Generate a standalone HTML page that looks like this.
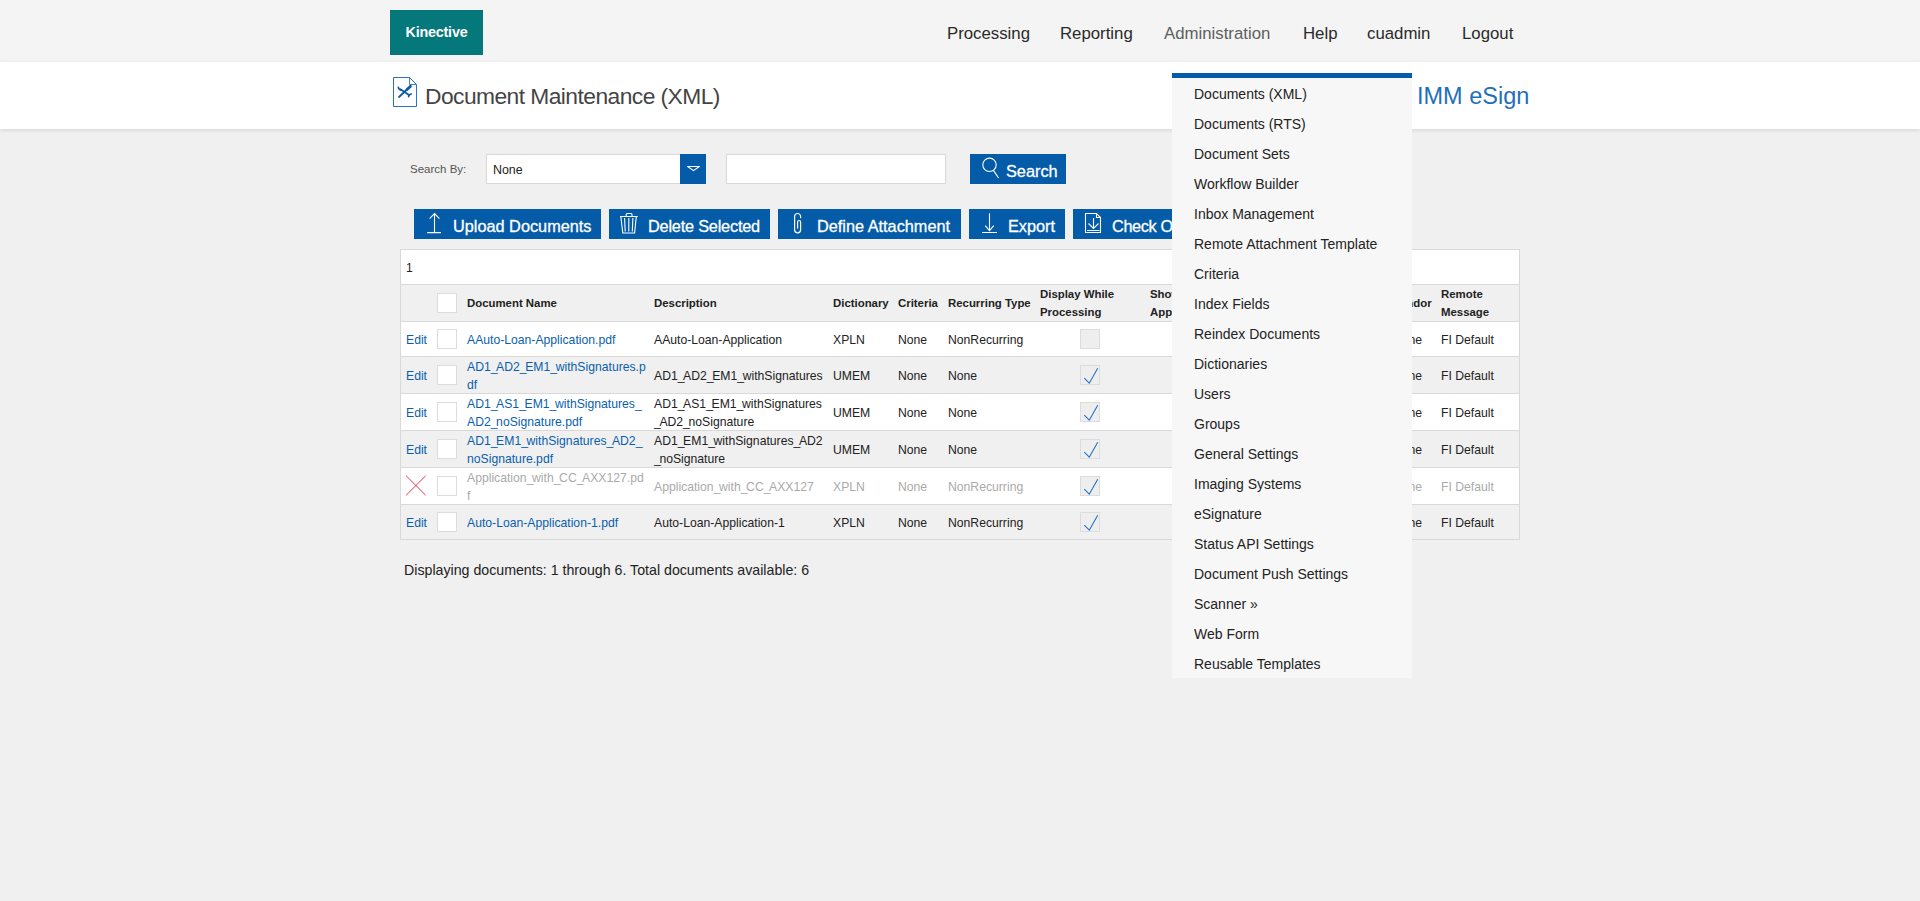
<!DOCTYPE html>
<html><head><meta charset="utf-8">
<style>
*{box-sizing:border-box;margin:0;padding:0}
html,body{width:1920px;height:901px;overflow:hidden}
body{background:#f0f0f0;font-family:"Liberation Sans",sans-serif;color:#222;position:relative}
.abs{position:absolute}
#hdr{left:0;top:0;width:1920px;height:62px;background:#f4f4f4}
#logo{left:390px;top:10px;width:93px;height:45px;background:#04787a;color:#fff;font-weight:bold;font-size:14.3px;letter-spacing:-0.2px;line-height:45px;text-align:center}
.nav{top:23px;font-size:16.8px;color:#2a2a2a;line-height:22px;white-space:nowrap}
#tbar{left:0;top:62px;width:1920px;height:67px;background:#fff;box-shadow:0 1px 4px rgba(0,0,0,0.12)}
#ttl{left:425px;top:82px;font-size:22.8px;letter-spacing:-0.55px;color:#444;line-height:28px;white-space:nowrap}
#imm{left:1417px;top:81px;font-size:23.5px;color:#1f6fba;line-height:30px;white-space:nowrap}
#dd{left:1172px;top:73px;width:240px;height:605px;background:#f7f7f7;border-top:5px solid #045ba8}
.mi{left:22px;font-size:14px;color:#222;line-height:18px;white-space:nowrap}

#sby{left:410px;top:161px;font-size:11.5px;color:#555;line-height:16px}
#sel{left:486px;top:154px;width:220px;height:30px;background:#fff;border:1px solid #d8d8d8}
#sel .t{position:absolute;left:6px;top:7px;font-size:12.4px;color:#222;line-height:16px}
#sel .ar{position:absolute;right:-1px;top:-1px;width:26px;height:30px;background:#045ba8}
#txt{left:726px;top:154px;width:220px;height:30px;background:#fff;border:1px solid #d8d8d8}
.btn{height:30px;background:#045ba8;color:#fff;font-size:16.3px;line-height:30px;white-space:nowrap}
.btn svg{position:absolute}
.btn span{position:absolute;top:2px;-webkit-text-stroke:0.3px #fff}
#tbl{left:400px;top:249px;width:1120px;height:291px;background:#fff;border:1px solid #d9d9d9}
#pg{left:406px;top:260px;font-size:12px;color:#222;line-height:16px}
#thd{left:400px;top:284px;width:1120px;height:38px;background:#f0f0f0;box-shadow:inset 1px 0 #d9d9d9,inset -1px 0 #d9d9d9;border-top:1px solid #d9d9d9;border-bottom:1px solid #d9d9d9}
.th{position:absolute;top:50%;transform:translateY(-50%);font-size:11.4px;font-weight:bold;color:#222;line-height:18px;white-space:nowrap}
.row{position:absolute;left:400px;width:1120px;border-bottom:1px solid #d9d9d9;box-shadow:inset 1px 0 #d9d9d9,inset -1px 0 #d9d9d9}
.row .c{position:absolute;top:calc(50% + 1px);transform:translateY(-50%);font-size:12.2px;color:#222;line-height:18px;white-space:nowrap}
.row .lnk{color:#0a5fad}
.row.dis .c{color:#aaa}
.cb{position:absolute;left:37px;top:50%;margin-top:-10px;width:20px;height:20px;background:#fff;border:1px solid #dcdcdc}
.cb2{position:absolute;left:680px;top:50%;margin-top:-10px;width:20px;height:20px;background:#eee;border:1px solid #dcdcdc}
.cb2 svg{position:absolute;left:0;top:0}
.xic{position:absolute;left:5px;top:50%;margin-top:-11px}
#foot{left:404px;top:561px;font-size:14.2px;color:#222;line-height:18px;white-space:nowrap}
.row u{text-decoration:none;letter-spacing:-1.4px}
</style></head><body>
<div id="hdr" class="abs"></div>
<div id="logo" class="abs">Kinective</div>
<div class="abs nav" style="left:947px">Processing</div>
<div class="abs nav" style="left:1060px">Reporting</div>
<div class="abs nav" style="left:1164px;color:#5e5e5e">Administration</div>
<div class="abs nav" style="left:1303px">Help</div>
<div class="abs nav" style="left:1367px">cuadmin</div>
<div class="abs nav" style="left:1462px">Logout</div>
<div id="tbar" class="abs"></div>
<svg class="abs" style="left:392px;top:76px" width="26" height="32" viewBox="0 0 26 32"><path d="M1.5 1.5H17.5L24.5 8.5V30.5H1.5Z" stroke="#2a72c4" stroke-width="1" fill="#fff"/><path d="M17.5 1.5V8.5H24.5" stroke="#2a72c4" stroke-width="0.9" fill="none"/><path d="M7 21L15.5 13" stroke="#0c5aa6" stroke-width="1.8" stroke-linecap="round"/><path d="M15 13.5L18.5 10.2" stroke="#0c5aa6" stroke-width="2.8" stroke-linecap="round"/><path d="M8.5 13.2L17 19" stroke="#0c5aa6" stroke-width="1.8" stroke-linecap="round"/><path d="M6.3 11.2Q6.6 13.9 9 14.2M19.3 18Q16.5 18.4 16.6 20.8" stroke="#0c5aa6" stroke-width="1.6" fill="none" stroke-linecap="round"/></svg>
<div id="ttl" class="abs">Document Maintenance (XML)</div>
<div id="imm" class="abs">IMM eSign</div>


<div id="sby" class="abs">Search By:</div>
<div id="sel" class="abs"><div class="t">None</div><div class="ar"><svg width="26" height="30" viewBox="0 0 26 30"><path d="M7.6 12.5H19.4L13.5 16.6Z" stroke="#fff" stroke-width="1.1" stroke-linejoin="round" fill="none"/></svg></div></div>
<div id="txt" class="abs"></div>
<div class="abs btn" style="left:970px;top:154px;width:96px"><svg width="24" height="26" style="left:10px;top:2px" viewBox="0 0 24 26"><circle cx="9.5" cy="8.8" r="6.7" stroke="#fff" stroke-width="1.1" fill="none"/><path d="M13.6 14.6L18.6 22" stroke="#fff" stroke-width="1.1" fill="none"/></svg><span style="left:36px">Search</span></div>

<div class="abs btn" style="left:414px;top:209px;width:187px"><svg width="20" height="26" style="left:11px;top:2px" viewBox="0 0 20 26"><path d="M9.5 2.5V21M4.6 7.6L9.5 2.6L14.4 7.6M2.2 21.6H16" stroke="#fff" stroke-width="1.1" fill="none"/></svg><span style="left:39px">Upload Documents</span></div>
<div class="abs btn" style="left:609px;top:209px;width:161px"><svg width="22" height="26" style="left:9px;top:2px" viewBox="0 0 22 26"><path d="M2 5.5H19.7M8.2 5.5V3.5Q8.2 2.5 9.2 2.5H13Q14 2.5 14 3.5V5.5M2.8 5.5L4.8 22H16.6L18.3 5.5M6.6 7L7.2 20.5M10.8 7V20.5M14.9 7L14.3 20.5" stroke="#fff" stroke-width="1.1" fill="none"/></svg><span style="left:39px;letter-spacing:-0.2px">Delete Selected</span></div>
<div class="abs btn" style="left:778px;top:209px;width:183px"><svg width="20" height="26" style="left:11px;top:2px" viewBox="0 0 20 26"><path d="M11.6 7.2V5.5A3 3 0 0 0 5.6 5.5V18.8A3 3 0 0 0 11.6 18.8V11A1.5 1.5 0 0 0 8.6 11V17.5" stroke="#fff" stroke-width="1.2" fill="none"/></svg><span style="left:39px">Define Attachment</span></div>
<div class="abs btn" style="left:969px;top:209px;width:96px"><svg width="20" height="26" style="left:11px;top:2px" viewBox="0 0 20 26"><path d="M9.5 2.3V19.7M5.2 14.6L9.5 19.6L13.8 14.6M2 21.5H17" stroke="#fff" stroke-width="1.1" fill="none"/></svg><span style="left:39px">Export</span></div>
<div class="abs btn" style="left:1073px;top:209px;width:120px"><svg width="22" height="26" style="left:9px;top:2px" viewBox="0 0 22 26"><path d="M3.5 2.5H14.5L18.5 6.5V21.5H3.5Z M14.5 2.5V6.5H18.5 M11.5 7V17.5M6.5 12.5L11.5 17.5L16.5 12.5M5 19.5H17.5" stroke="#fff" stroke-width="1.1" fill="none"/></svg><span style="left:39px;letter-spacing:-0.35px">Check Out</span></div>

<div id="tbl" class="abs"></div>
<div id="pg" class="abs">1</div>
<div id="thd" class="abs">
<div class="cb" style="left:37px"></div>
<div class="th" style="left:67px">Document Name</div>
<div class="th" style="left:254px">Description</div>
<div class="th" style="left:433px">Dictionary</div>
<div class="th" style="left:498px">Criteria</div>
<div class="th" style="left:548px">Recurring Type</div>
<div class="th" style="left:640px">Display While<br>Processing</div>
<div class="th" style="left:750px">Show<br>Approval</div>
<div class="th" style="left:993px">Vendor</div>
<div class="th" style="left:1041px">Remote<br>Message</div>
</div>
<div class="row" style="top:322px;height:35px;background:#fff">
<div class="c lnk" style="left:6px">Edit</div>
<div class="cb"></div>
<div class="c lnk" style="left:67px">AAuto-Loan-Application.pdf</div>
<div class="c" style="left:254px">AAuto-Loan-Application</div>
<div class="c" style="left:433px">XPLN</div>
<div class="c" style="left:498px">None</div>
<div class="c" style="left:548px">NonRecurring</div>
<div class="cb2"></div>
<div class="c" style="left:993px">None</div>
<div class="c" style="left:1041px">FI Default</div>
</div>
<div class="row" style="top:357px;height:37px;background:#f0f0f0">
<div class="c lnk" style="left:6px">Edit</div>
<div class="cb"></div>
<div class="c lnk" style="left:67px">AD1<u>_</u>AD2<u>_</u>EM1<u>_</u>withSignatures.p<br>df</div>
<div class="c" style="left:254px">AD1<u>_</u>AD2<u>_</u>EM1<u>_</u>withSignatures</div>
<div class="c" style="left:433px">UMEM</div>
<div class="c" style="left:498px">None</div>
<div class="c" style="left:548px">None</div>
<div class="cb2"><svg width="20" height="20" viewBox="0 0 20 20"><path d="M3.3 12.2L8.3 17.2L16.7 2.3" stroke="#1f70c8" stroke-width="1.1" fill="none"/></svg></div>
<div class="c" style="left:993px">None</div>
<div class="c" style="left:1041px">FI Default</div>
</div>
<div class="row" style="top:394px;height:37px;background:#fff">
<div class="c lnk" style="left:6px">Edit</div>
<div class="cb"></div>
<div class="c lnk" style="left:67px">AD1<u>_</u>AS1<u>_</u>EM1<u>_</u>withSignatures<u>_</u><br>AD2<u>_</u>noSignature.pdf</div>
<div class="c" style="left:254px">AD1<u>_</u>AS1<u>_</u>EM1<u>_</u>withSignatures<br><u>_</u>AD2<u>_</u>noSignature</div>
<div class="c" style="left:433px">UMEM</div>
<div class="c" style="left:498px">None</div>
<div class="c" style="left:548px">None</div>
<div class="cb2"><svg width="20" height="20" viewBox="0 0 20 20"><path d="M3.3 12.2L8.3 17.2L16.7 2.3" stroke="#1f70c8" stroke-width="1.1" fill="none"/></svg></div>
<div class="c" style="left:993px">None</div>
<div class="c" style="left:1041px">FI Default</div>
</div>
<div class="row" style="top:431px;height:37px;background:#f0f0f0">
<div class="c lnk" style="left:6px">Edit</div>
<div class="cb"></div>
<div class="c lnk" style="left:67px">AD1<u>_</u>EM1<u>_</u>withSignatures<u>_</u>AD2<u>_</u><br>noSignature.pdf</div>
<div class="c" style="left:254px">AD1<u>_</u>EM1<u>_</u>withSignatures<u>_</u>AD2<br><u>_</u>noSignature</div>
<div class="c" style="left:433px">UMEM</div>
<div class="c" style="left:498px">None</div>
<div class="c" style="left:548px">None</div>
<div class="cb2"><svg width="20" height="20" viewBox="0 0 20 20"><path d="M3.3 12.2L8.3 17.2L16.7 2.3" stroke="#1f70c8" stroke-width="1.1" fill="none"/></svg></div>
<div class="c" style="left:993px">None</div>
<div class="c" style="left:1041px">FI Default</div>
</div>
<div class="row dis" style="top:468px;height:37px;background:#fff">
<svg class="xic" width="22" height="22" viewBox="0 0 22 22"><path d="M1.2 0.8L20.6 20.2M20.6 0.8L1.2 20.2" stroke="#d93a55" stroke-width="1" fill="none"/></svg>
<div class="cb"></div>
<div class="c lnk" style="left:67px">Application<u>_</u>with<u>_</u>CC<u>_</u>AXX127.pd<br>f</div>
<div class="c" style="left:254px">Application<u>_</u>with<u>_</u>CC<u>_</u>AXX127</div>
<div class="c" style="left:433px">XPLN</div>
<div class="c" style="left:498px">None</div>
<div class="c" style="left:548px">NonRecurring</div>
<div class="cb2"><svg width="20" height="20" viewBox="0 0 20 20"><path d="M3.3 12.2L8.3 17.2L16.7 2.3" stroke="#1f70c8" stroke-width="1.1" fill="none"/></svg></div>
<div class="c" style="left:993px">None</div>
<div class="c" style="left:1041px">FI Default</div>
</div>
<div class="row" style="top:505px;height:35px;background:#f0f0f0">
<div class="c lnk" style="left:6px">Edit</div>
<div class="cb"></div>
<div class="c lnk" style="left:67px">Auto-Loan-Application-1.pdf</div>
<div class="c" style="left:254px">Auto-Loan-Application-1</div>
<div class="c" style="left:433px">XPLN</div>
<div class="c" style="left:498px">None</div>
<div class="c" style="left:548px">NonRecurring</div>
<div class="cb2"><svg width="20" height="20" viewBox="0 0 20 20"><path d="M3.3 12.2L8.3 17.2L16.7 2.3" stroke="#1f70c8" stroke-width="1.1" fill="none"/></svg></div>
<div class="c" style="left:993px">None</div>
<div class="c" style="left:1041px">FI Default</div>
</div>

<div id="foot" class="abs">Displaying documents: 1 through 6. Total documents available: 6</div>

<div id="dd" class="abs">
<div class="abs mi" style="top:7px">Documents (XML)</div>
<div class="abs mi" style="top:37px">Documents (RTS)</div>
<div class="abs mi" style="top:67px">Document Sets</div>
<div class="abs mi" style="top:97px">Workflow Builder</div>
<div class="abs mi" style="top:127px">Inbox Management</div>
<div class="abs mi" style="top:157px">Remote Attachment Template</div>
<div class="abs mi" style="top:187px">Criteria</div>
<div class="abs mi" style="top:217px">Index Fields</div>
<div class="abs mi" style="top:247px">Reindex Documents</div>
<div class="abs mi" style="top:277px">Dictionaries</div>
<div class="abs mi" style="top:307px">Users</div>
<div class="abs mi" style="top:337px">Groups</div>
<div class="abs mi" style="top:367px">General Settings</div>
<div class="abs mi" style="top:397px">Imaging Systems</div>
<div class="abs mi" style="top:427px">eSignature</div>
<div class="abs mi" style="top:457px">Status API Settings</div>
<div class="abs mi" style="top:487px">Document Push Settings</div>
<div class="abs mi" style="top:517px">Scanner &raquo;</div>
<div class="abs mi" style="top:547px">Web Form</div>
<div class="abs mi" style="top:577px">Reusable Templates</div>
</div>
</body></html>
